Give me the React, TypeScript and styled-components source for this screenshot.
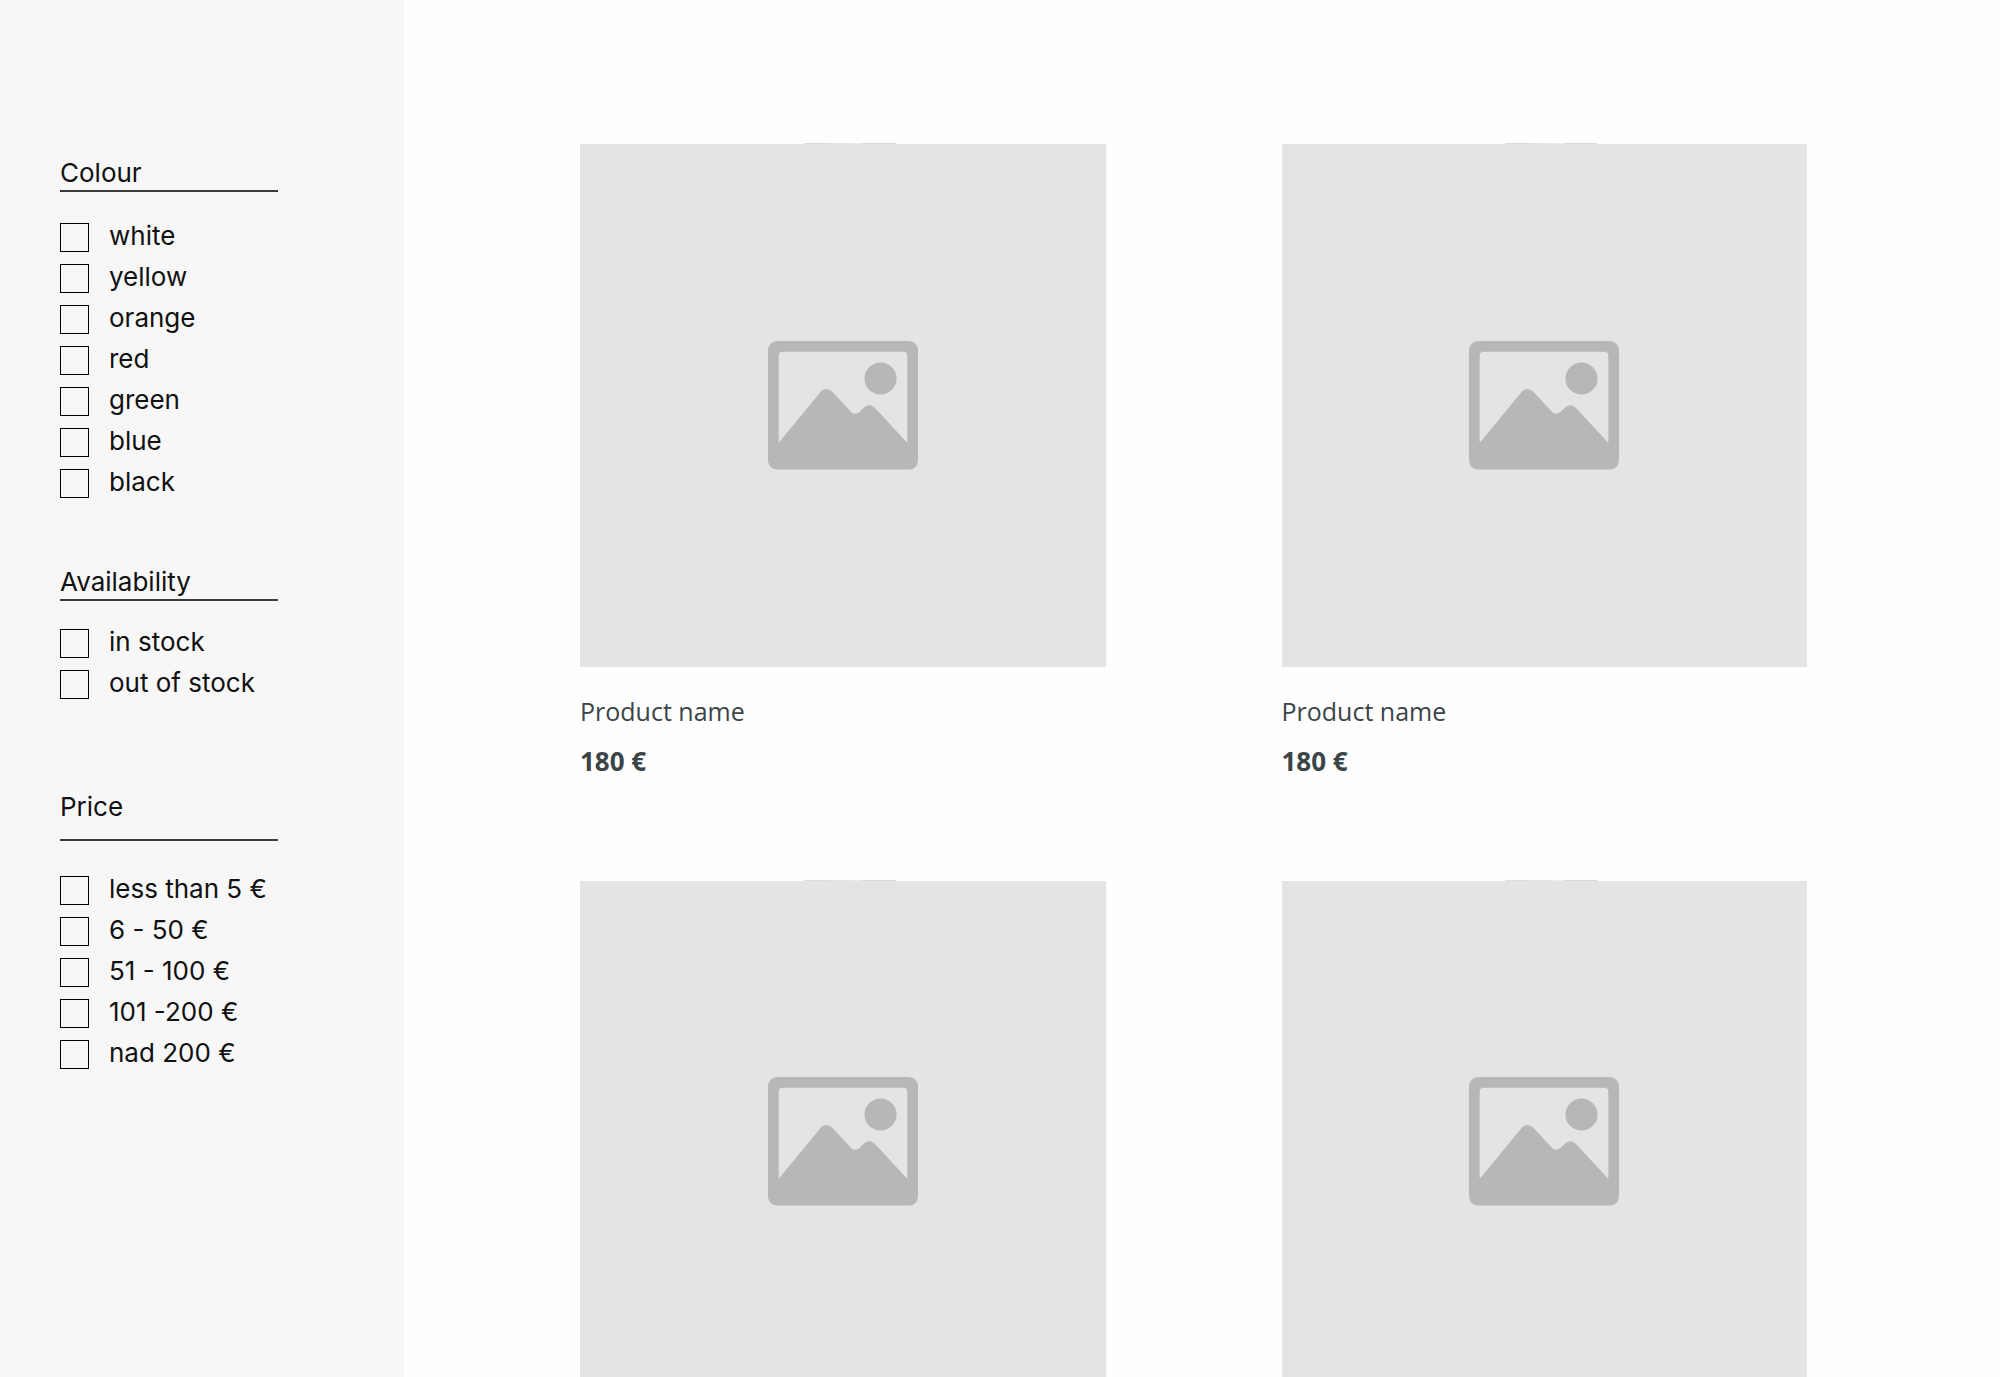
import React from "react";
import styled, { createGlobalStyle } from "styled-components";

const GlobalStyle = createGlobalStyle`
  *, *::before, *::after { box-sizing: border-box; }
  body {
    margin: 0;
    background: #fefefe;
    font-family: Inter, "Liberation Sans", sans-serif;
  }
`;

const Shell = styled.div`
  display: flex;
  height: 100vh;
  overflow: hidden;
`;

const Sidebar = styled.aside`
  flex: 0 0 404px;
  display: flex;
  flex-direction: column;
  gap: 69px;
  padding: 158px 126px 0 60px;
  background: #f7f7f7;
  color: #111;
`;

const Group = styled.fieldset<{ $before?: number }>`
  margin: ${(p) => p.$before ?? 0}px 0 0;
  padding: 0;
  border: 0;
  min-width: 0;
`;

const GroupTitle = styled.legend<{ $rule: number }>`
  width: 100%;
  padding: 0 0 ${(p) => p.$rule}px;
  border-bottom: 2px solid #3a3a3a;
  font-size: 26px;
  line-height: 30px;
`;

const Options = styled.div<{ $top: number }>`
  display: flex;
  flex-direction: column;
  gap: 12px;
  padding-top: ${(p) => p.$top}px;
`;

const Option = styled.label`
  display: flex;
  align-items: flex-start;
  gap: 20px;
  height: 29px;
  font-size: 26px;
  line-height: 26px;
  white-space: nowrap;
  cursor: pointer;
`;

const Box = styled.input`
  appearance: none;
  flex: none;
  width: 29px;
  height: 29px;
  margin: 0;
  border: 1px solid #000;
  cursor: pointer;

  &:checked {
    background: #111;
    box-shadow: inset 0 0 0 5px #f7f7f7;
  }
`;

const Main = styled.main`
  flex: 1;
  min-width: 0;
  padding: 144px 193px 0 176px;
`;

const Grid = styled.div`
  display: grid;
  grid-template-columns: repeat(2, minmax(0, 1fr));
  column-gap: 176px;
  row-gap: 104px;
`;

const Card = styled.article`
  color: #3b4446;
  font-family: "Open Sans", "Noto Sans", sans-serif;
  line-height: 32px;
`;

const Picture = styled.div`
  position: relative;
  display: flex;
  align-items: center;
  justify-content: center;
  aspect-ratio: 526 / 523;
  background: #e4e4e4;

  svg {
    display: block;
    width: 150px;
  }
`;

const TopEdge = styled.span`
  position: absolute;
  left: 50%;
  top: -1px;
  width: 92px;
  height: 1px;
  margin-left: -39px;
  background: linear-gradient(90deg, #dcdcdc 0 20%, #e8e8e8 50%, #f0f0f0 62%, #dadada 64%);
`;

const Name = styled.h2`
  margin: 28px 0 0;
  font-size: 25px;
  font-weight: 400;
`;

const Price = styled.p`
  margin: 18px 0 0;
  font-size: 26px;
  font-weight: 700;
`;

const groups = [
  {
    title: "Colour",
    rule: 2,
    top: 31,
    options: ["white", "yellow", "orange", "red", "green", "blue", "black"],
  },
  { title: "Availability", rule: 2, top: 28, options: ["in stock", "out of stock"] },
  {
    title: "Price",
    rule: 17,
    top: 35,
    before: 24,
    options: ["less than 5 €", "6 - 50 €", "51 - 100 €", "101 -200 €", "nad 200 €"],
  },
];

type Product = { id: number; name?: string; price?: string };

const products: Product[] = [
  { id: 1, name: "Product name", price: "180 €" },
  { id: 2, name: "Product name", price: "180 €" },
  { id: 3 },
  { id: 4 },
];

const Placeholder = () => (
  <svg viewBox="0 0 448 384" aria-hidden="true">
    <rect width="448" height="384" rx="27" fill="#b7b7b7" />
    <path
      d="M32 304V44Q32 32 44 32H404Q416 32 416 44V304L318 199Q305 186 291 196L273 212Q261 222 249 213L193 152Q176 136 159 150Z"
      fill="#e4e4e4"
    />
    <circle cx="336" cy="112" r="48" fill="#b7b7b7" />
  </svg>
);

export default function App() {
  return (
    <>
      <GlobalStyle />
      <Shell>
        <Sidebar>
          {groups.map((g) => (
            <Group key={g.title} $before={g.before}>
              <GroupTitle $rule={g.rule}>{g.title}</GroupTitle>
              <Options $top={g.top}>
                {g.options.map((o) => (
                  <Option key={o}>
                    <Box type="checkbox" name={g.title} value={o} />
                    {o}
                  </Option>
                ))}
              </Options>
            </Group>
          ))}
        </Sidebar>
        <Main>
          <Grid>
            {products.map((p) => (
              <Card key={p.id}>
                <Picture>
                  <TopEdge />
                  <Placeholder />
                </Picture>
                {p.name && <Name>{p.name}</Name>}
                {p.price && <Price>{p.price}</Price>}
              </Card>
            ))}
          </Grid>
        </Main>
      </Shell>
    </>
  );
}
